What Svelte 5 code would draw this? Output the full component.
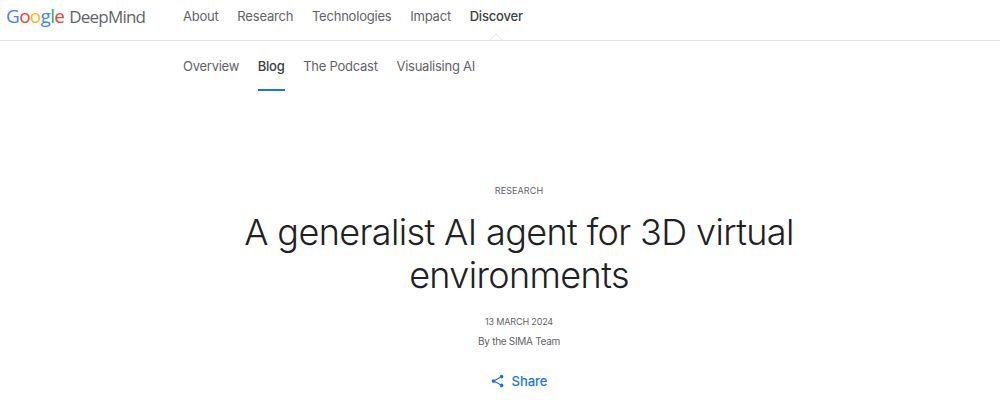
<script lang="ts">
  const MAIN_LINKS = ['About', 'Research', 'Technologies', 'Impact', 'Discover'];
  const SUB_LINKS = ['Overview', 'Blog', 'The Podcast', 'Visualising AI'];
  const GOOGLE = [
    { ch: 'G', color: '#4285f4' },
    { ch: 'o', color: '#ea4335' },
    { ch: 'o', color: '#fbbc05' },
    { ch: 'g', color: '#4285f4' },
    { ch: 'l', color: '#34a853' },
    { ch: 'e', color: '#ea4335' },
  ];
</script>

<div class="page">
  <header class="topbar">
    <a class="logo" href="#top">
      <span class="google">{#each GOOGLE as l}<span style="color: {l.color}">{l.ch}</span>{/each}</span>
      <span class="deepmind">DeepMind</span>
    </a>
    <nav class="main-nav">
      {#each MAIN_LINKS as link}
        <a href="#top" class:current={link === 'Discover'}>{link}</a>
      {/each}
    </nav>
  </header>

  <nav class="sub-nav">
    {#each SUB_LINKS as link}
      <a href="#top" class:current={link === 'Blog'}>{link}</a>
    {/each}
  </nav>

  <main class="hero">
    <p class="eyebrow">RESEARCH</p>
    <h1>A generalist AI agent for 3D virtual environments</h1>
    <p class="date">13 MARCH 2024</p>
    <p class="byline">By the SIMA Team</p>
    <a class="share" href="#top">
      <svg width="14" height="14" viewBox="-0.6 0 14 14" fill="#1a73e8" stroke="#1a73e8" stroke-width="1.1">
        <path d="M3.2 7 10.8 2.7M3.2 7l7.6 4.3" />
        <circle cx="2.9" cy="7" r="1.3" />
        <circle cx="11" cy="2.6" r="1.3" />
        <circle cx="11" cy="11.4" r="1.3" />
      </svg>
      Share
    </a>
  </main>
</div>

<style>
  :global(body) {
    background: #fff;
    font-family: Inter, 'Liberation Sans', sans-serif;
  }

  .page {
    height: 400px;
    overflow: hidden;
  }

  a {
    text-decoration: none;
  }

  .topbar {
    display: flex;
    align-items: center;
    height: 32px;
    padding: 0 0 8px 6px;
    border-bottom: 1px solid #e0e2e4;
    position: relative;
  }

  .topbar::after {
    content: '';
    position: absolute;
    left: 491px;
    bottom: -5px;
    width: 9px;
    height: 9px;
    background: #fff;
    border-left: 1px solid #e0e2e4;
    border-top: 1px solid #e0e2e4;
    transform: rotate(45deg);
    clip-path: polygon(0 0, 100% 0, 0 100%);
  }

  .logo {
    display: flex;
    align-items: center;
    gap: 5px;
    width: 177px;
    font-family: 'Open Sans', sans-serif;
  }

  .google {
    font-size: 19px;
    font-weight: 500;
    letter-spacing: -0.7px;
  }

  .deepmind {
    font-size: 17px;
    letter-spacing: -0.8px;
    color: #5f6368;
  }

  .main-nav {
    display: flex;
    gap: 18.7px;
  }

  .main-nav a,
  .sub-nav a {
    font-size: 13px;
    color: #5f6368;
    letter-spacing: -0.2px;
  }

  .main-nav a.current {
    color: #3c4043;
    font-weight: 500;
  }

  .sub-nav {
    display: flex;
    gap: 18.7px;
    height: 50px;
    padding-left: 183px;
  }

  .sub-nav a {
    display: flex;
    align-items: center;
    padding-top: 2px;
    border-bottom: 2px solid transparent;
    letter-spacing: -0.25px;
  }

  .sub-nav a.current {
    color: #3c4043;
    font-weight: 500;
    border-bottom-color: #1a73e8;
  }

  .hero {
    display: flex;
    flex-direction: column;
    align-items: center;
    width: 600px;
    margin-left: 219px;
    padding-top: 94px;
    text-align: center;
  }

  p,
  h1 {
    margin: 0;
  }

  .eyebrow {
    font-size: 9px;
    line-height: 12px;
    letter-spacing: 0.1px;
    color: #5f6368;
  }

  h1 {
    margin-top: 14px;
    font-size: 36px;
    line-height: 43px;
    font-weight: 300;
    letter-spacing: -0.62px;
    color: #202124;
  }

  .date {
    margin-top: 19px;
    font-size: 9px;
    line-height: 12px;
    letter-spacing: -0.15px;
    color: #5f6368;
  }

  .byline {
    margin-top: 7px;
    font-size: 10px;
    line-height: 12px;
    letter-spacing: -0.3px;
    color: #5f6368;
  }

  .share {
    display: flex;
    align-items: center;
    gap: 7px;
    margin-top: 26px;
    font-size: 13px;
    font-weight: 500;
    color: #1a73e8;
  }
</style>
